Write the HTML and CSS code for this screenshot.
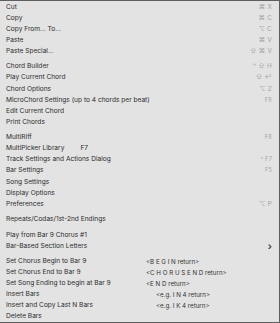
FILE: index.html
```html
<!DOCTYPE html>
<html>
<head>
<meta charset="utf-8">
<link rel="stylesheet" href="styles.css">
</head>
<body>
<div class="menu">
  <div class="group">
    <div class="item"><span class="label">Cut</span><span class="key">⌘ X</span></div>
    <div class="item"><span class="label">Copy</span><span class="key">⌘ C</span></div>
    <div class="item"><span class="label">Copy From... To...</span><span class="key">⌥ C</span></div>
    <div class="item"><span class="label">Paste</span><span class="key">⌘ V</span></div>
    <div class="item"><span class="label">Paste Special...</span><span class="key">⇧ ⌘ V</span></div>
  </div>
  <div class="sep"></div>
  <div class="group">
    <div class="item"><span class="label">Chord Builder</span><span class="key">^ ⇧ H</span></div>
    <div class="item"><span class="label">Play Current Chord</span><span class="key">⇧ ↩</span></div>
    <div class="item"><span class="label">Chord Options</span><span class="key">⌥ Z</span></div>
    <div class="item"><span class="label">MicroChord Settings (up to 4 chords per beat)</span><span class="key small">F8</span></div>
    <div class="item"><span class="label">Edit Current Chord</span></div>
    <div class="item"><span class="label">Print Chords</span></div>
  </div>
  <div class="sep"></div>
  <div class="group">
    <div class="item"><span class="label">MultiRiff</span><span class="key small">F8</span></div>
    <div class="item"><span class="label">MultiPicker Library<span class="tab">F7</span></span></div>
    <div class="item"><span class="label">Track Settings and Actions Dialog</span><span class="key small">^ F7</span></div>
    <div class="item"><span class="label">Bar Settings</span><span class="key small">F5</span></div>
    <div class="item"><span class="label">Song Settings</span></div>
    <div class="item"><span class="label">Display Options</span></div>
    <div class="item"><span class="label">Preferences</span><span class="key">⌥ P</span></div>
  </div>
  <div class="sep"></div>
  <div class="group">
    <div class="item"><span class="label">Repeats/Codas/1st-2nd Endings</span></div>
  </div>
  <div class="sep"></div>
  <div class="group">
    <div class="item"><span class="label">Play from Bar 9 Chorus #1</span></div>
    <div class="item"><span class="label">Bar-Based Section Letters</span><span class="arrow">›</span></div>
  </div>
  <div class="sep"></div>
  <div class="group">
    <div class="item hinted"><span class="label">Set Chorus Begin to Bar 9</span><span class="hint">&lt;B E G I N return&gt;</span></div>
    <div class="item hinted"><span class="label">Set Chorus End to Bar 9</span><span class="hint">&lt;C H O R U S E N D return&gt;</span></div>
    <div class="item hinted"><span class="label">Set Song Ending to begin at Bar 9</span><span class="hint">&lt;E N D return&gt;</span></div>
    <div class="item hinted"><span class="label">Insert Bars</span><span class="hint indent">&lt;e.g. I N 4 return&gt;</span></div>
    <div class="item hinted"><span class="label">Insert and Copy Last N Bars</span><span class="hint indent">&lt;e.g. I K 4 return&gt;</span></div>
    <div class="item"><span class="label">Delete Bars</span></div>
  </div>
</div>
</body>
</html>
```

FILE: styles.css
```css
html, body {
  margin: 0;
  padding: 0;
  background: #e3e3e3;
}

.menu {
  box-sizing: border-box;
  width: 280px;
  height: 323px;
  background: #e3e3e3;
  border-top: 1px solid #5e5e5e;
  border-right: 1px solid #5e5e5e;
  border-bottom: 1px solid #5e5e5e;
  font-family: Inter, "Liberation Sans", sans-serif;
  font-size: 6.6px;
  color: #2b2b2b;
  display: flex;
  flex-direction: column;
}

.group {
  display: flex;
  flex-direction: column;
}

.item {
  height: 11.1px;
  display: flex;
  align-items: center;
  padding: 0 7px 0 6px;
  white-space: nowrap;
}

.label {
  flex: 1;
}

.tab {
  margin-left: 16px;
}

.key {
  color: #a3a3a3;
  font-size: 6.4px;
  letter-spacing: 0.2px;
}

.key.small {
  font-size: 5.6px;
}

.arrow {
  font-size: 10px;
  line-height: 6px;
  color: #333;
  font-weight: 600;
}

.hinted .label {
  flex: 0 0 140px;
}

.hint {
  flex: 1;
  font-size: 6.2px;
  color: #333;
}

.hint.indent {
  padding-left: 10px;
}

.sep {
  height: 1px;
  background: #cdcdcd;
  margin: 2.3px 0 2px 0;
}
```
